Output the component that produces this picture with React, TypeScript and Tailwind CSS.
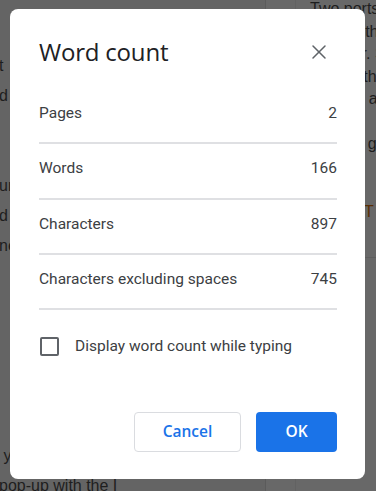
import React from "react";
import { X } from "lucide-react";

type Stat = {
  label: string;
  value: number;
};

const stats: Stat[] = [
  { label: "Pages", value: 2 },
  { label: "Words", value: 166 },
  { label: "Characters", value: 897 },
  { label: "Characters excluding spaces", value: 745 },
];

// page text peeking out left of the dialog
const leftLines: string[] = [
  "",
  "t",
  "d",
  "",
  "",
  "ur",
  "d (",
  "ne",
  "",
  "",
  "",
  "",
  "",
  "",
  " y",
  "pop-up with the I",
];

// side panel text peeking out right of the dialog
const rightLines: string[] = [
  "Two ports",
  "Both of th",
  "in editor. S",
  "with all th",
  "number at",
  "",
  "and the gl",
  "",
  "",
];

const App: React.FC = () => {
  return (
    <div className="relative w-[376px] h-[491px] overflow-hidden font-['Roboto',sans-serif]">
      {/* dimmed document behind the modal */}
      <div className="flex h-full">
        <div className="w-[265px] bg-[#646464] overflow-hidden">
          <div className="mt-[21px] text-[16px] leading-[30px] text-[#1e1e1e] font-['Liberation_Sans',sans-serif]">
            {leftLines.map((line, i) => (
              <div key={i} className="h-[30px] whitespace-pre -ml-[1px]">
                {line}
              </div>
            ))}
          </div>
        </div>
        <div className="w-px bg-[#5b5b5b]" />
        <div className="w-[29px] bg-[#686868]" />
        <div className="w-px bg-[#626262]" />
        <div className="flex-1 bg-[#686868] overflow-hidden pl-[14px]">
          <div className="-mt-[2px] text-[16px] leading-[22.5px] text-[#1e1e1e] font-['Liberation_Sans',sans-serif]">
            {rightLines.map((line, i) => (
              <div key={i} className="h-[22.5px] whitespace-pre">
                {line}
              </div>
            ))}
            <div className="h-[22.5px] whitespace-pre text-[#5a2f05]">
              {"Only in T"}
            </div>
            <div className="mt-[34px] h-px bg-[#5e5e5e] -ml-[14px]" />
          </div>
        </div>
      </div>

      {/* modal */}
      <div className="absolute left-[10px] top-[9px] w-[355px] h-[470px] bg-white rounded-[8px] flex flex-col pl-[29px] pr-[28px] pt-[29px] pb-[27px]">
        <div className="flex items-center justify-between h-[28px] mb-[23px]">
          <h2 className="text-[24px] leading-[28px] text-[#202124] font-['Open_Sans',sans-serif] tracking-[-0.2px]">
            Word count
          </h2>
          <button className="mr-[6px] w-[24px] h-[24px] flex items-center justify-center text-[#5f6368]">
            <X size={24} strokeWidth={1.5} />
          </button>
        </div>

        <div className="flex flex-col">
          {stats.map((stat) => (
            <div
              key={stat.label}
              className="flex items-center justify-between h-[55.3px] border-b-2 border-[#dfe0e3] text-[15.5px] text-[#3c4043] pb-[4px]"
            >
              <span>{stat.label}</span>
              <span>{stat.value}</span>
            </div>
          ))}
        </div>

        <label className="flex items-center mt-[27px] h-[18px] text-[15.5px] text-[#3c4043]">
          <span className="w-[19px] h-[19px] border-2 border-[#5f6368] rounded-[2px] ml-px mr-[16px]" />
          Display word count while typing
        </label>

        <div className="flex justify-end gap-[15px] mt-auto">
          <button className="w-[107px] h-[40px] rounded-[4px] border border-[#dadce0] text-[#1a73e8] text-[15.5px] font-semibold font-['Open_Sans',sans-serif]">
            Cancel
          </button>
          <button className="w-[81px] h-[40px] rounded-[4px] bg-[#1a73e8] text-white text-[15.5px] font-semibold font-['Open_Sans',sans-serif]">
            OK
          </button>
        </div>
      </div>
    </div>
  );
};

export default App;
